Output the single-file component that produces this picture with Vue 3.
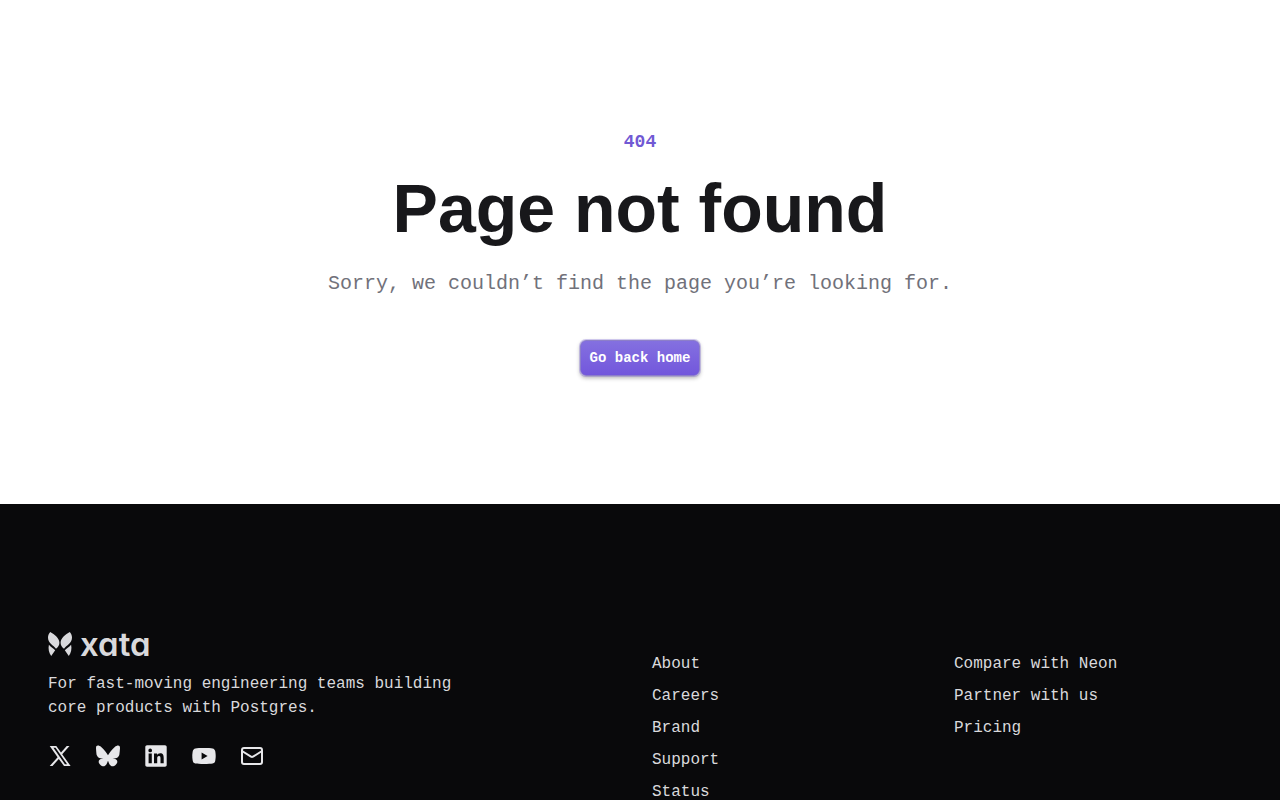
<template>
  <div class="page">
    <main class="not-found">
      <p class="code">404</p>
      <h1>Page not found</h1>
      <p class="message">Sorry, we couldn’t find the page you’re looking for.</p>
      <a href="/" class="home-button">Go back home</a>
    </main>

    <footer class="footer">
      <div class="brand">
        <a href="/" class="logo">
          <svg viewBox="0 0 24 24" width="24" height="24" fill="currentColor" aria-hidden="true">
            <path d="M2.200 0C6.500 2.500 11.400 6 11.400 10.800c0 2.300-1.200 4.300-3.400 6C5.500 13.400 0 11.600 0 5.600 0 3.400.9 1.600 2.200 0Z" />
            <path d="M21.800 0C17.500 2.500 12.600 6 12.600 10.800c0 2.300 1.200 4.300 3.400 6 2.500-3.400 8-5.200 8-11.200 0-2.200-.9-4-2.200-5.600Z" />
            <path d="M.9 12.800C2.600 15 5 16.300 7.200 18.200L3.200 24C.9 21 0 16.700.9 12.800Z" />
            <path d="M23.100 12.800c-1.700 2.200-4.100 3.500-6.300 5.400l4 5.800c2.300-3 3.200-7.300 2.300-11.200Z" />
          </svg>
          <span>xata</span>
        </a>
        <p class="tagline">For fast-moving engineering teams building core products with Postgres.</p>
        <div class="socials">
          <a v-for="social in socials" :key="social.name" href="#" :aria-label="social.name">
            <svg viewBox="0 0 24 24" width="24" height="24" fill="currentColor" aria-hidden="true">
              <path :d="social.path" fill-rule="evenodd" />
            </svg>
          </a>
          <a href="#" aria-label="Email">
            <svg
              viewBox="0 0 24 24"
              width="24"
              height="24"
              fill="none"
              stroke="currentColor"
              stroke-width="2"
              stroke-linecap="round"
              stroke-linejoin="round"
              aria-hidden="true"
            >
              <rect x="2" y="4" width="20" height="16" rx="2" />
              <path d="m2 7 8.970 5.700a1.940 1.940 0 0 0 2.060 0L22 7" />
            </svg>
          </a>
        </div>
      </div>

      <ul v-for="(links, index) in columns" :key="index" class="links">
        <li v-for="link in links" :key="link">
          <a href="#">{{ link }}</a>
        </li>
      </ul>
    </footer>
  </div>
</template>

<script setup>
const columns = [
  ['About', 'Careers', 'Brand', 'Support', 'Status'],
  ['Compare with Neon', 'Partner with us', 'Pricing']
]

const socials = [
  {
    name: 'X',
    path: 'M1.700 2h6.600l4.700 6.400L18.700 2h2.800l-7.300 8.200L22.600 22H16l-5.200-7.100L4.500 22H1.700l7.900-8.800L1.700 2Zm3.700 1.800 11.500 16.400h2.200L7.500 3.800H5.400Z'
  },
  {
    name: 'Bluesky',
    path: 'M5.200 2.900C8 5 10.900 9.100 12 11.300c1.100-2.200 4-6.300 6.800-8.400 2-1.500 5.200-2.600 5.200 1 0 .7-.4 6.100-.7 7-.9 3-4 3.800-6.700 3.300 4.800.8 6 3.500 3.400 6.200-5 5.100-7.200-1.300-7.700-2.900-.1-.3-.2-.4-.3-.4s-.2.1-.3.400c-.5 1.600-2.700 8-7.700 2.900-2.600-2.700-1.400-5.400 3.400-6.200-2.700.5-5.800-.3-6.700-3.300C.4 10 0 4.600 0 3.900c0-3.600 3.200-2.500 5.200-1Z'
  },
  {
    name: 'LinkedIn',
    path: 'M3 1.300h18c1 0 1.700.8 1.700 1.700v18c0 1-.8 1.700-1.700 1.700H3c-1 0-1.700-.8-1.700-1.700V3c0-1 .8-1.700 1.700-1.700ZM4.600 9.500v9.700h3.200V9.500H4.600ZM6.200 4.600a1.850 1.850 0 1 0 0 3.700 1.850 1.850 0 0 0 0-3.700ZM10 9.500v9.700h3.200v-4.800c0-1.300.3-2.500 1.800-2.500s1.500 1.400 1.500 2.600v4.700h3.200v-5.300c0-2.600-.6-4.600-3.600-4.600-1.500 0-2.500.8-2.900 1.600h-.1V9.500H10Z'
  },
  {
    name: 'YouTube',
    path: 'M12 4c4 0 7 .1 8.600.4 1.400.3 2.300 1.200 2.600 2.600.4 2 .5 3.400.5 5s-.1 3-.5 5c-.3 1.400-1.200 2.300-2.600 2.600-1.600.3-4.600.4-8.600.4s-7-.1-8.600-.4C2 19.300 1.100 18.400.8 17c-.4-2-.5-3.400-.5-5s.1-3 .5-5C1.100 5.600 2 4.700 3.400 4.400 5 4.100 8 4 12 4ZM9.600 8.600v6.800l6-3.400-6-3.400Z'
  }
]
</script>

<style>
body {
  margin: 0;
  background-color: #fff;
}
</style>

<style scoped>
.page {
  font-family: "Liberation Mono", monospace;
  font-size: 16px;
  line-height: 24px;
}

p,
h1,
ul {
  margin: 0;
}

a {
  color: inherit;
  text-decoration: none;
}

.not-found {
  display: flex;
  flex-direction: column;
  align-items: center;
  padding: 128px 24px;
  text-align: center;
}

.code {
  font-size: 18px;
  font-weight: 600;
  line-height: 28px;
  color: #7159d4;
}

h1 {
  margin-top: 16px;
  font-family: "Liberation Sans", sans-serif;
  font-size: 68px;
  font-weight: 600;
  line-height: 72px;
  color: #18181b;
}

.message {
  margin-top: 24px;
  font-size: 20px;
  line-height: 32px;
  color: #71717a;
}

.home-button {
  display: flex;
  align-items: center;
  box-sizing: border-box;
  height: 36px;
  margin-top: 40px;
  padding: 0 9px;
  border: 1px solid #8d7fc9;
  border-radius: 6px;
  background: linear-gradient(#8470e0, #7357dc);
  box-shadow: 0 0 0 1px rgba(113, 89, 212, 0.3), 0 2px 4px rgba(0, 0, 0, 0.3);
  font-size: 14px;
  font-weight: 600;
  line-height: 20px;
  color: #fff;
}

.home-button:hover {
  background: #7357dc;
}

.footer {
  display: grid;
  grid-template-columns: repeat(4, minmax(0, 1fr));
  gap: 24px;
  padding: 128px 48px;
  background-color: #09090b;
  color: #d9d9dc;
}

.brand {
  grid-column: span 2;
}

.logo {
  display: flex;
  align-items: center;
  gap: 8px;
  height: 24px;
  color: #d9d9dc;
}

.logo span {
  font-family: Inter, sans-serif;
  font-size: 33px;
  font-weight: 600;
  font-feature-settings: "cv11";
}

.tagline {
  max-width: 448px;
  margin-top: 16px;
}

.socials {
  display: flex;
  gap: 24px;
  margin-top: 24px;
  color: #e7e7ea;
}

.socials a {
  display: flex;
}

.links {
  display: flex;
  flex-direction: column;
  gap: 8px;
  padding: 20px 0 0;
  list-style: none;
}

.links a:hover {
  color: #fff;
}
</style>
